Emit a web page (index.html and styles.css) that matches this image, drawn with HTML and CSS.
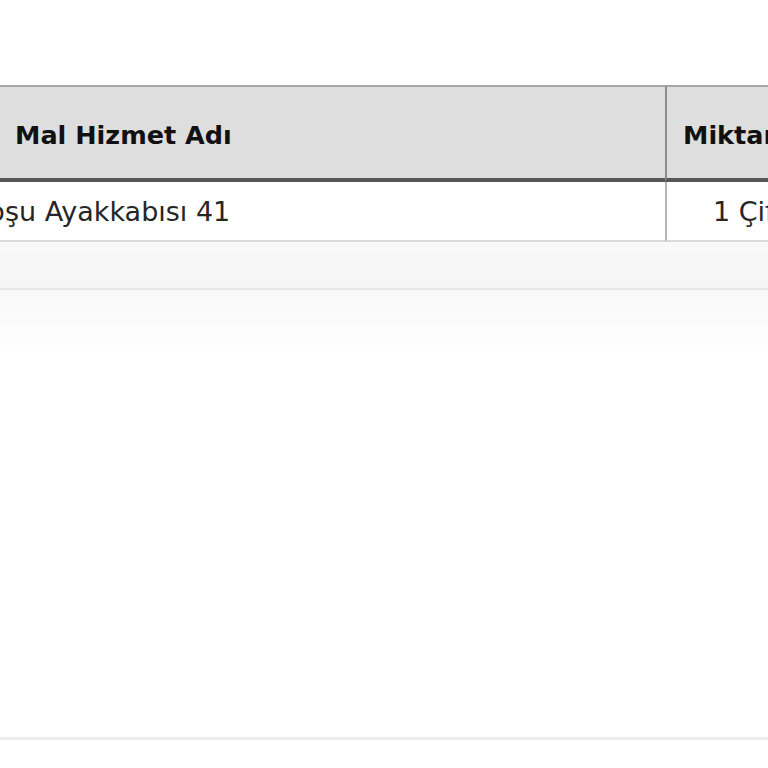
FILE: index.html
```html
<!DOCTYPE html>
<html lang="tr">
<head>
<meta charset="utf-8">
<title>Mal Hizmet Tablosu</title>
<link rel="stylesheet" href="styles.css">
</head>
<body>
<div class="page">
  <table class="items">
    <colgroup>
      <col class="col-name">
      <col class="col-qty">
    </colgroup>
    <thead>
      <tr>
        <th class="cell-name">Mal Hizmet Adı</th>
        <th class="cell-qty">Miktarı</th>
      </tr>
    </thead>
    <tbody>
      <tr>
        <td class="cell-name">Koşu Ayakkabısı 41</td>
        <td class="cell-qty qty-value">1 Çift</td>
      </tr>
    </tbody>
  </table>
  <div class="totals-band"></div>
  <div class="fade-band"></div>
  <div class="empty-area"></div>
  <div class="footer-rule"></div>
</div>
</body>
</html>
```
FILE: styles.css
```css
html, body {
  margin: 0;
  padding: 0;
  background: #ffffff;
  overflow: hidden;
}

.page {
  width: 768px;
  height: 768px;
  overflow: hidden;
  padding-top: 85px;
  box-sizing: border-box;
  font-family: "DejaVu Sans", "Liberation Sans", sans-serif;
  font-size: 26px;
  line-height: 30px;
  color: #222;
}

.items {
  margin-left: -41px;
  width: 1000px;
  table-layout: fixed;
  border-collapse: separate;
  border-spacing: 0;
}

.col-name { width: 706px; }
.col-qty { width: 294px; }

.items th,
.items td {
  box-sizing: border-box;
  text-align: left;
  white-space: nowrap;
  overflow: hidden;
}

.items th {
  background: #dedede;
  color: #111;
  font-size: 25.5px;
  font-weight: bold;
  border-top: 2px solid #a6a6a6;
  border-bottom: 4px solid #565656;
  padding: 33px 16px 28px 56px;
}

.items td {
  background: #ffffff;
  color: #262626;
  font-size: 27px;
  border-bottom: 2px solid #dadada;
  padding: 15px 16px 13px 13px;
}

.items .cell-qty {
  border-left: 2px solid #8c8c8c;
  padding-left: 16px;
}

.items td.cell-qty {
  border-left-color: #b4b4b4;
}

.items .qty-value {
  padding-left: 46px;
}

.totals-band {
  height: 46px;
  background: linear-gradient(#f9f9f9, #f4f4f4);
  border-bottom: 2px solid #e6e6e6;
}

.fade-band {
  height: 64px;
  background: linear-gradient(#f8f8f8, #fdfdfd 85%, #ffffff);
}

.empty-area {
  height: 383px;
}

.footer-rule {
  height: 3px;
  background: #ececec;
}
```
